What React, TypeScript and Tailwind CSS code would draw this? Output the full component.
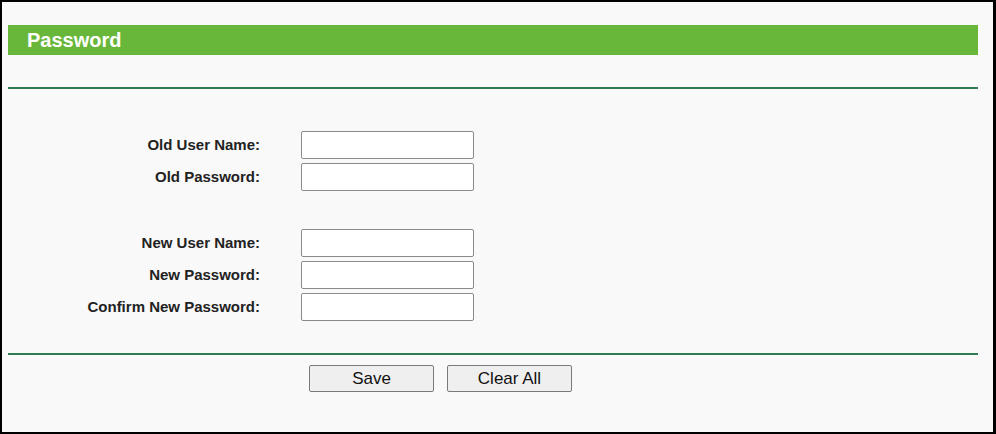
import React from 'react';

const font = { fontFamily: '"Liberation Sans", Arial, sans-serif' };

const Row = ({ label }: { label: string }) => (
  <div className="flex items-center h-[28px]">
    <label className="w-[252px] text-right text-[15px] font-bold text-[#222]">{label}</label>
    <input
      type="text"
      className="ml-[41px] w-[173px] h-[28px] bg-white border border-[#8a8a8a] rounded-[2px] outline-none"
    />
  </div>
);

export default function App() {
  return (
    <div style={font} className="w-[996px] h-[434px] bg-black pl-[2px] pt-[2px] pr-[3px] pb-[2px]">
      <div className="w-full h-full bg-[#f9f9f9] pl-[6px] pr-[15px] pt-[23px] flex flex-col">
        <div className="h-[30px] bg-[#68b73a] flex items-center pl-[19px]">
          <span className="text-white font-bold text-[20px]">Password</span>
        </div>
        <div className="mt-[32px] h-[2px] bg-[#2d7a53]" />

        <div className="mt-[42px] flex flex-col gap-[4px]">
          <Row label="Old User Name:" />
          <Row label="Old Password:" />
        </div>
        <div className="mt-[38px] flex flex-col gap-[4px]">
          <Row label="New User Name:" />
          <Row label="New Password:" />
          <Row label="Confirm New Password:" />
        </div>

        <div className="mt-[32px] h-[2px] bg-[#2d7a53]" />
        <div className="mt-[10px] flex gap-[13px] pl-[301px]">
          <button className="w-[125px] h-[27px] bg-[#efefef] border border-[#7a7a7a] rounded-[2px] text-[17px] text-[#111]">
            Save
          </button>
          <button className="w-[125px] h-[27px] bg-[#efefef] border border-[#7a7a7a] rounded-[2px] text-[17px] text-[#111]">
            Clear All
          </button>
        </div>
      </div>
    </div>
  );
}
